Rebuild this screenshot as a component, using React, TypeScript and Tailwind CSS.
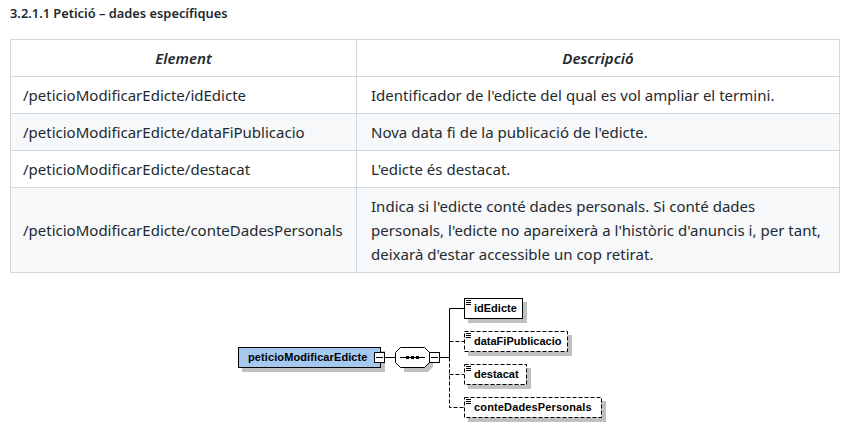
const rows = [
  { el: '/peticioModificarEdicte/idEdicte', desc: ["Identificador de l'edicte del qual es vol ampliar el termini."] },
  { el: '/peticioModificarEdicte/dataFiPublicacio', desc: ["Nova data fi de la publicació de l'edicte."] },
  { el: '/peticioModificarEdicte/destacat', desc: ["L'edicte és destacat."] },
  {
    el: '/peticioModificarEdicte/conteDadesPersonals',
    desc: [
      "Indica si l'edicte conté dades personals. Si conté dades",
      "personals, l'edicte no apareixerà a l'històric d'anuncis i, per tant,",
      "deixarà d'estar accessible un cop retirat.",
    ],
  },
];

function Notes({ x, y }: { x: number; y: number }) {
  return <path d={`M${x} ${y + 0.5}h5M${x} ${y + 2.5}h5M${x} ${y + 4.5}h5`} stroke="#000" />;
}

function ChildBox({ x, y, w, h, label, dashed, spacing }: { x: number; y: number; w: number; h: number; label: string; dashed?: boolean; spacing?: number }) {
  return (
    <g>
      <rect x={x + 4} y={y + 4} width={w + 1} height={h + 1} fill="#c0c0c0" />
      <rect x={x + 0.5} y={y + 0.5} width={w} height={h} fill="#fff" stroke="#000" strokeDasharray={dashed ? '4 2' : undefined} />
      <Notes x={x + 2} y={y + 2} />
      <text x={x + 10} y={y + 14} fontSize="11" fontWeight="700" letterSpacing={spacing} fontFamily="'Liberation Sans', Arial, sans-serif" fill="#000">
        {label}
      </text>
    </g>
  );
}

function Minus({ x, y }: { x: number; y: number }) {
  return (
    <g>
      <rect x={x + 0.5} y={y + 0.5} width="10" height="10" fill="#fff" stroke="#000" />
      <path d={`M${x + 2} ${y + 5.5}h7`} stroke="#000" />
    </g>
  );
}

function Diagram() {
  return (
    <svg width="380" height="130" viewBox="230 295 380 130" className="block">
      {/* root element */}
      <rect x="242" y="351" width="143" height="21" fill="#c0c0c0" />
      <rect x="238.5" y="347.5" width="142" height="20" fill="#a4c8f0" stroke="#000" />
      <text x="248" y="361" fontSize="11" fontWeight="700" letterSpacing="0.1" fontFamily="'Liberation Sans', Arial, sans-serif" fill="#000">
        peticioModificarEdicte
      </text>
      <path d="M385 357.5h11" stroke="#000" />
      {/* sequence */}
      <path d="M404 351h24l5 5v11l-5 5h-24z" fill="#c0c0c0" />
      <path d="M395.5 352.5l5-5h24l5 5v10l-5 5h-24l-5-5z" fill="#fff" stroke="#000" />
      <path d="M400 357.5h25" stroke="#000" />
      <path d="M406 356h3v3h-3zM411 356h3v3h-3zM416 356h3v3h-3z" fill="#000" />
      <Minus x={374} y={352} />
      <Minus x={429} y={352} />
      {/* connectors */}
      <path d="M439 357.5h10.5M449.5 357.5V308.5H464" stroke="#000" fill="none" />
      <path d="M449.5 357.5V407.5H464M449.5 341.5H464M449.5 374.5H464" stroke="#000" fill="none" strokeDasharray="4 2" />
      <ChildBox x={464} y={298} w={58} h={20} label="idEdicte" />
      <ChildBox x={464} y={331} w={103} h={20} label="dataFiPublicacio" dashed />
      <ChildBox x={464} y={364} w={62} h={20} label="destacat" dashed />
      <ChildBox x={464} y={397} w={137} h={20} label="conteDadesPersonals" dashed spacing={0.15} />
    </svg>
  );
}

export default function App() {
  return (
    <div className="w-[851px] h-[435px] overflow-hidden bg-white text-[#24292e] font-['Noto_Sans',sans-serif]">
      <div className="pl-[10px] pr-[11px] pt-[5px]">
        <h4 className="text-[12.85px] leading-[17px] font-semibold">3.2.1.1 Petició – dades específiques</h4>
        <table className="mt-[17px] w-[830px] border-collapse text-[15px] table-fixed">
          <thead>
            <tr className="bg-white">
              <th className="w-[346px] h-[37px] border border-[#d0d7de] px-[12px] py-[6px] font-semibold italic leading-6 text-center">Element</th>
              <th className="h-[37px] border border-[#d0d7de] px-[13px] py-[6px] font-semibold italic leading-6 text-center">Descripció</th>
            </tr>
          </thead>
          <tbody>
            {rows.map((r, i) => (
              <tr key={r.el} className={i % 2 === 1 ? 'bg-[#f6f8fa]' : 'bg-white'}>
                <td className="h-[37px] border border-[#d0d7de] px-[12px] py-[6px] leading-6 whitespace-nowrap">{r.el}</td>
                <td className="h-[37px] border border-[#d0d7de] pl-[14px] pr-[12px] py-[6px] leading-6 whitespace-nowrap tracking-[0.02px]">
                  {r.desc.map((l) => (
                    <div key={l}>{l}</div>
                  ))}
                </td>
              </tr>
            ))}
          </tbody>
        </table>
        <div className="mt-[22px] ml-[220px]">
          <Diagram />
        </div>
      </div>
    </div>
  );
}
